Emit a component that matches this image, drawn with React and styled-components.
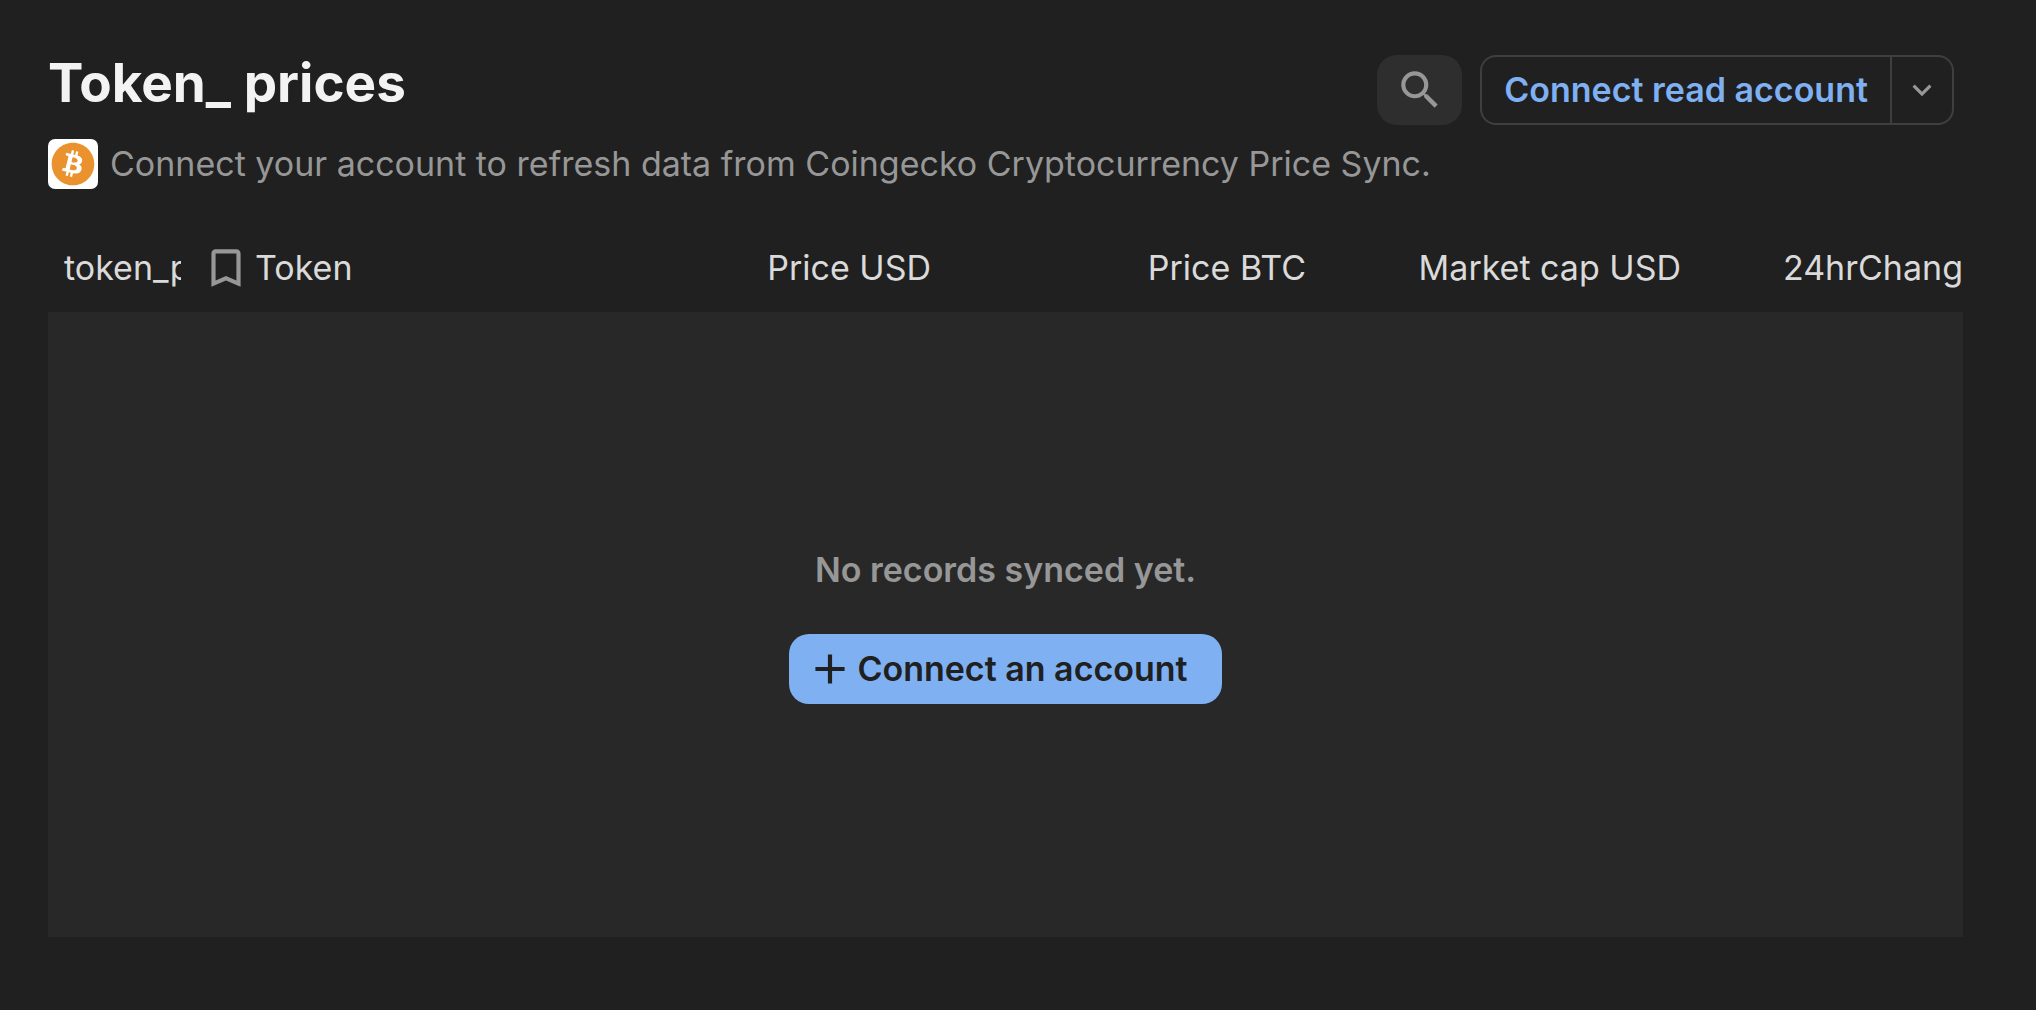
import React from "react";
import styled, { createGlobalStyle } from "styled-components";
import { FaBitcoin } from "react-icons/fa";
import {
  MdAdd,
  MdBookmarkBorder,
  MdExpandMore,
  MdSearch,
} from "react-icons/md";

const colors = {
  background: "#202020",
  panel: "#282828",
  buttonMuted: "#2e2e2e",
  border: "#3f3f3f",
  title: "#f3f3f3",
  text: "#dadada",
  muted: "#979797",
  accent: "#7eb0f2",
  bitcoin: "#ea922e",
};

const GlobalStyle = createGlobalStyle`
  * {
    box-sizing: border-box;
  }

  body {
    margin: 0;
    background: ${colors.background};
    color: ${colors.text};
    font-family: Inter, "Liberation Sans", sans-serif;
    font-size: 34px;
    line-height: 44px;
  }

  button {
    font: inherit;
    white-space: nowrap;
    cursor: pointer;
  }

  svg {
    display: block;
    flex: none;
  }
`;

const Page = styled.main`
  min-height: 100vh;
  padding: 48px 73px 72px 48px;
`;

const Header = styled.header`
  display: flex;
  align-items: flex-start;
  justify-content: space-between;
  padding-right: 9px;
`;

const Title = styled.h1`
  margin: 0;
  color: ${colors.title};
  font-size: 53px;
  font-weight: 700;
  line-height: 70px;
`;

const Source = styled.p`
  display: flex;
  align-items: center;
  gap: 12px;
  margin: 14px 0 0;
  color: ${colors.muted};
  line-height: 46px;
`;

const SourceIcon = styled.span`
  display: flex;
  flex: none;
  align-items: center;
  justify-content: center;
  width: 50px;
  height: 50px;
  border-radius: 7px;
  background: #fff;
  color: ${colors.bitcoin};
`;

const Actions = styled.div`
  display: flex;
  flex: none;
  gap: 18px;
  padding-top: 7px;
`;

const SearchButton = styled.button`
  display: flex;
  align-items: center;
  justify-content: center;
  width: 85px;
  height: 70px;
  padding: 0;
  border: 0;
  border-radius: 20px;
  background: ${colors.buttonMuted};
  color: ${colors.muted};
`;

const SplitButton = styled.div`
  display: flex;
  height: 70px;
  border: 2px solid ${colors.border};
  border-radius: 16px;
`;

const SplitAction = styled.button`
  padding: 0 22px;
  border: 0;
  background: none;
  color: ${colors.accent};
  font-weight: 600;
`;

const SplitToggle = styled.button`
  display: flex;
  align-items: center;
  justify-content: center;
  width: 62px;
  padding: 0;
  border: 0;
  border-left: 2px solid ${colors.border};
  background: none;
  color: ${colors.muted};
`;

const Table = styled.table`
  width: 100%;
  margin-top: 34px;
  border-collapse: collapse;
  table-layout: fixed;
`;

const HeaderCell = styled.th`
  width: ${(props) => props.$width || "auto"};
  height: 89px;
  padding: ${(props) => props.$padding || "0 16px"};
  font-weight: 400;
  text-align: left;
`;

const HeaderLabel = styled.div`
  display: flex;
  align-items: center;
  justify-content: ${(props) => (props.$end ? "flex-end" : "flex-start")};
  gap: 4px;
  overflow: hidden;
  white-space: nowrap;
`;

const EmptyCell = styled.td`
  height: 625px;
  padding: 2px 0 0;
  background: ${colors.panel};
`;

const EmptyState = styled.div`
  display: flex;
  flex-direction: column;
  align-items: center;
  gap: 42px;
  color: ${colors.muted};
  font-weight: 600;
`;

const ConnectButton = styled.button`
  display: flex;
  align-items: center;
  gap: 2px;
  height: 70px;
  padding: 0 34px 0 16px;
  border: 0;
  border-radius: 20px;
  background: ${colors.accent};
  color: ${colors.background};
`;

const App = () => (
  <Page>
    <GlobalStyle />

    <Header>
      <Title>Token_ prices</Title>

      <Actions>
        <SearchButton aria-label="Search">
          <MdSearch size={50} />
        </SearchButton>
        <SplitButton>
          <SplitAction>Connect read account</SplitAction>
          <SplitToggle aria-label="More options">
            <MdExpandMore size={38} />
          </SplitToggle>
        </SplitButton>
      </Actions>
    </Header>

    <Source>
      <SourceIcon>
        <FaBitcoin size={44} />
      </SourceIcon>
      Connect your account to refresh data from Coingecko Cryptocurrency Price
      Sync.
    </Source>

    <Table>
      <thead>
        <tr>
          <HeaderCell $width="149px">
            <HeaderLabel>token_p</HeaderLabel>
          </HeaderCell>
          <HeaderCell $width="375px" $padding="0 16px 0 4px">
            <HeaderLabel>
              <MdBookmarkBorder size={50} color={colors.muted} />
              Token
            </HeaderLabel>
          </HeaderCell>
          <HeaderCell $width="375px">
            <HeaderLabel $end>Price USD</HeaderLabel>
          </HeaderCell>
          <HeaderCell $width="375px">
            <HeaderLabel $end>Price BTC</HeaderLabel>
          </HeaderCell>
          <HeaderCell $width="375px">
            <HeaderLabel $end>Market cap USD</HeaderLabel>
          </HeaderCell>
          <HeaderCell $padding="0">
            <HeaderLabel $end>24hrChang</HeaderLabel>
          </HeaderCell>
        </tr>
      </thead>
      <tbody>
        <tr>
          <EmptyCell colSpan={6}>
            <EmptyState>
              No records synced yet.
              <ConnectButton>
                <MdAdd size={50} />
                Connect an account
              </ConnectButton>
            </EmptyState>
          </EmptyCell>
        </tr>
      </tbody>
    </Table>
  </Page>
);

export default App;
